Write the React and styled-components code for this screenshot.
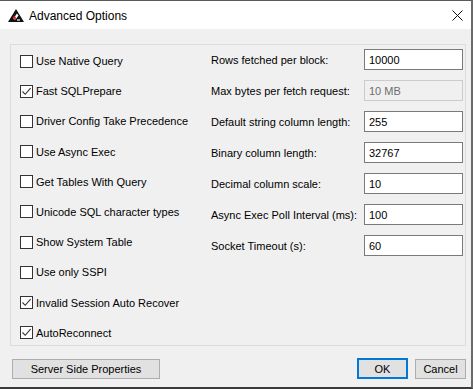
import { createGlobalStyle, styled } from "styled-components";

const GlobalStyle = createGlobalStyle`
   html, body {
      margin: 0;
      padding: 0;
      background: #ffffff;
   }
   * {
      box-sizing: border-box;
   }
`;

const Window = styled.div`
   width: 473px;
   height: 389px;
   display: flex;
   flex-direction: column;
   background: #f0f0f0;
   border-top: 1px solid #5a5a5a;
   border-right: 2px solid #6a6a6a;
   border-bottom: 2px solid #3a3a3a;
   overflow: hidden;
   font-family: "Liberation Sans", Arial, sans-serif;
   font-size: 11px;
   color: #000;
`;

const TitleBar = styled.div`
   height: 28px;
   flex: none;
   display: flex;
   align-items: center;
   gap: 5px;
   padding: 0 8px 0 8px;
   background: #ffffff;
`;

const TitleText = styled.span`
   flex: 1;
   font-family: "Liberation Sans", "Segoe UI", sans-serif;
   font-size: 12px;
   color: #000;
   padding-top: 1px;
`;

const Body = styled.div`
   flex: 1;
   display: flex;
   flex-direction: column;
   padding: 15px 5px 0 10px;
`;

const GroupBox = styled.div`
   height: 302px;
   display: flex;
   border: 1px solid #dcdcdc;
`;

const LeftCol = styled.div`
   width: 200px;
   display: flex;
   flex-direction: column;
   gap: 14.2px;
   padding: 8px 0 0 9px;
`;

const CheckRow = styled.label`
   height: 16px;
   display: flex;
   align-items: center;
   gap: 3px;
   white-space: nowrap;
`;

const Box = styled.span`
   width: 13px;
   height: 13px;
   flex: none;
   display: flex;
   align-items: center;
   justify-content: center;
   background: #fff;
   border: 1px solid #333;
`;

const RightCol = styled.div`
   flex: 1;
   display: flex;
   flex-direction: column;
   gap: 10px;
   padding: 4px 0 0 0;
`;

const FieldRow = styled.div`
   height: 21px;
   display: grid;
   grid-template-columns: 153px 99px;
   align-items: center;
   white-space: nowrap;
`;

const Input = styled.div`
   height: 21px;
   display: flex;
   align-items: center;
   padding-left: 4px;
   background: ${(p) => (p.disabled ? "#f0f0f0" : "#ffffff")};
   border: 1px solid ${(p) => (p.disabled ? "#cccccc" : "#7a7a7a")};
   color: ${(p) => (p.disabled ? "#6d6d6d" : "#000")};
`;

const ButtonRow = styled.div`
   display: flex;
   align-items: center;
   gap: 7px;
   padding: 12px 0 0 2px;
`;

const Button = styled.div`
   height: ${(p) => (p.primary ? "21px" : "20px")};
   width: ${(p) => p.w}px;
   display: flex;
   align-items: center;
   justify-content: center;
   background: #e1e1e1;
   border: ${(p) => (p.primary ? "2px solid #0078d7" : "1px solid #adadad")};
`;

const Spacer = styled.div`
   flex: 1;
`;

const Check = () => (
   <svg width="11" height="11" viewBox="0 0 11 11">
      <path d="M1.5 5.5 L4.2 8.3 L9.6 2.2" fill="none" stroke="#333" strokeWidth="1.1" />
   </svg>
);

const Logo = () => (
   <svg width="16" height="13" viewBox="0 0 16 13">
      <path d="M8 0 L16 13 L0 13 Z" fill="#111" />
      <path d="M5 10 L9 4.5 L10.5 6.5 L7.5 10.5 Z" fill="#fff" />
      <circle cx="6.5" cy="8.8" r="1.6" fill="#d33" />
      <path d="M9 11 L12 11" stroke="#fff" strokeWidth="1.2" />
   </svg>
);

const Close = () => (
   <svg width="11" height="11" viewBox="0 0 11 11">
      <path d="M0.5 0.5 L10.5 10.5 M10.5 0.5 L0.5 10.5" stroke="#111" strokeWidth="1" />
   </svg>
);

const checks = [
   { name: "Use Native Query", on: false },
   { name: "Fast SQLPrepare", on: true },
   { name: "Driver Config Take Precedence", on: false },
   { name: "Use Async Exec", on: false },
   { name: "Get Tables With Query", on: false },
   { name: "Unicode SQL character types", on: false },
   { name: "Show System Table", on: false },
   { name: "Use only SSPI", on: false },
   { name: "Invalid Session Auto Recover", on: true },
   { name: "AutoReconnect", on: true },
];

const fields = [
   { name: "Rows fetched per block:", value: "10000" },
   { name: "Max bytes per fetch request:", value: "10 MB", disabled: true },
   { name: "Default string column length:", value: "255" },
   { name: "Binary column length:", value: "32767" },
   { name: "Decimal column scale:", value: "10" },
   { name: "Async Exec Poll Interval (ms):", value: "100" },
   { name: "Socket Timeout (s):", value: "60" },
];

const App = () => {
   return (
      <>
         <GlobalStyle />
         <Window>
            <TitleBar>
               <Logo />
               <TitleText>Advanced Options</TitleText>
               <Close />
            </TitleBar>
            <Body>
               <GroupBox>
                  <LeftCol>
                     {checks.map((c) => (
                        <CheckRow key={c.name}>
                           <Box>{c.on && <Check />}</Box>
                           {c.name}
                        </CheckRow>
                     ))}
                  </LeftCol>
                  <RightCol>
                     {fields.map((f) => (
                        <FieldRow key={f.name}>
                           <span>{f.name}</span>
                           <Input disabled={f.disabled}>{f.value}</Input>
                        </FieldRow>
                     ))}
                  </RightCol>
               </GroupBox>
               <ButtonRow>
                  <Button w={148}>Server Side Properties</Button>
                  <Spacer />
                  <Button primary w={51}>OK</Button>
                  <Button w={51}>Cancel</Button>
               </ButtonRow>
            </Body>
         </Window>
      </>
   );
};

export default App;
